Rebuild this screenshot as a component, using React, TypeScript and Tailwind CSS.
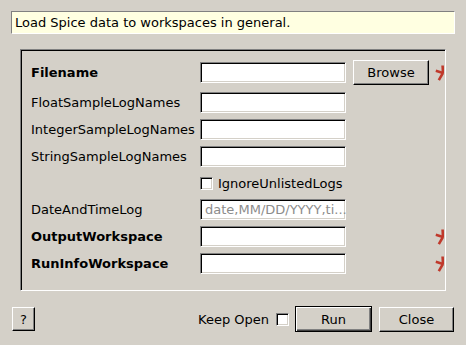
import React from "react";

const sunken =
  "border border-t-[#808080] border-l-[#808080] border-r-white border-b-white shadow-[inset_1px_1px_0_#000,inset_-1px_-1px_0_#d4d0c8] bg-white";

const raised =
  "border border-t-white border-l-white border-r-black border-b-black shadow-[inset_-1px_-1px_0_#808080] bg-[#d4d0c8] flex items-center justify-center";

function Star() {
  return (
    <svg width="10" height="16" viewBox="0 0 10 16" className="block">
      <path d="M7.6 0.5 L8 8.2" stroke="#c0392b" strokeWidth="2.6" fill="none" />
      <path d="M8 8 L0.8 5.8" stroke="#c0392b" strokeWidth="2.6" fill="none" />
      <path d="M8 8 L3.8 15.2" stroke="#c0392b" strokeWidth="2.6" fill="none" />
    </svg>
  );
}

function Row({
  label,
  bold,
  star,
  placeholder,
  className,
}: {
  label: string;
  bold?: boolean;
  star?: boolean;
  placeholder?: string;
  className?: string;
}) {
  return (
    <div className={"flex items-center h-[21px] " + (className || "")}>
      <div className={"w-[169px] " + (bold ? "font-bold" : "")}>{label}</div>
      <div className={"w-[146px] h-[21px] flex items-center pl-[4px] " + sunken}>
        {placeholder && <span className="text-[#8c8c8c]">{placeholder}</span>}
      </div>
      {star && (
        <div className="ml-[89px] w-[9px] overflow-hidden">
          <Star />
        </div>
      )}
    </div>
  );
}

export default function App() {
  return (
    <div
      className="w-[466px] h-[345px] bg-[#d4d0c8] pt-[11px] px-[11px] text-[13px] text-black leading-none"
      style={{ fontFamily: "'DejaVu Sans', sans-serif" }}
    >
      <div className="h-[23px] bg-[#ffffe1] border border-t-[#808080] border-l-[#808080] border-r-white border-b-white flex items-center pl-[3px]">
        Load Spice data to workspaces in general.
      </div>

      <div className="mt-[15px] ml-[9px] w-[426px] h-[242px] border border-t-[#808080] border-l-[#808080] border-r-white border-b-white shadow-[inset_1px_1px_0_#000] pl-[10px] pt-[10px] overflow-hidden">
        <div className="flex items-center h-[25px]">
          <div className="w-[169px] font-bold">Filename</div>
          <div className={"w-[146px] h-[21px] " + sunken}></div>
          <div className={"ml-[7px] w-[76px] h-[25px] " + raised}>Browse</div>
          <div className="ml-[6px] w-[9px] overflow-hidden">
            <Star />
          </div>
        </div>
        <Row label="FloatSampleLogNames" className="mt-[7px]" />
        <Row label="IntegerSampleLogNames" className="mt-[6px]" />
        <Row label="StringSampleLogNames" className="mt-[6px]" />
        <div className="mt-[6px] h-[20px] flex items-center">
          <div className="w-[169px]"></div>
          <div className={"w-[13px] h-[13px] " + sunken}></div>
          <div className="ml-[5px]">IgnoreUnlistedLogs</div>
        </div>
        <Row label="DateAndTimeLog" placeholder="date,MM/DD/YYYY,ti..." className="mt-[6px]" />
        <Row label="OutputWorkspace" bold star className="mt-[6px]" />
        <Row label="RunInfoWorkspace" bold star className="mt-[6px]" />
      </div>

      <div className="mt-[15px] h-[26px] flex items-center">
        <div className={"ml-[1px] w-[23px] h-[24px] " + raised}>?</div>
        <div className="flex-1"></div>
        <div>Keep Open</div>
        <div className={"ml-[7px] w-[13px] h-[13px] " + sunken}></div>
        <div className="ml-[6px] w-[77px] h-[26px] border border-black shadow-[inset_1px_1px_0_#fff,inset_-1px_-1px_0_#404040,inset_-2px_-2px_0_#808080] flex items-center justify-center">
          Run
        </div>
        <div className={"ml-[7px] mr-[1px] w-[75px] h-[25px] " + raised}>Close</div>
      </div>
    </div>
  );
}
